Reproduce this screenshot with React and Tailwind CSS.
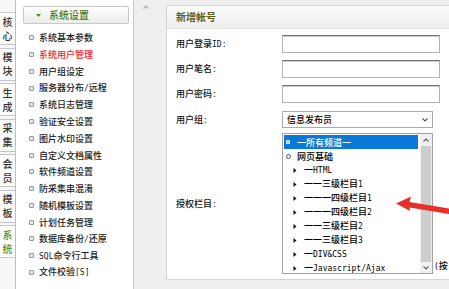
import React from "react";

const M = ({ children }) => (
  <span className="font-['DejaVu_Sans_Mono',monospace] text-[8px] font-normal">{children}</span>
);

const tabs = ["核心", "模块", "生成", "采集", "会员", "模板", "系统"];

const menu = [
  { t: "系统基本参数" },
  { t: "系统用户管理", red: true },
  { t: "用户组设定" },
  { t: <>服务器分布<M>/</M>远程</> },
  { t: "系统日志管理" },
  { t: "验证安全设置" },
  { t: "图片水印设置" },
  { t: "自定义文档属性" },
  { t: "软件频道设置" },
  { t: "防采集串混淆" },
  { t: "随机模板设置" },
  { t: "计划任务管理" },
  { t: <>数据库备份<M>/</M>还原</> },
  { t: <><M>SQL</M>命令行工具</> },
  { t: <>文件校验<M>[S]</M></> },
];

const rows = [
  { lvl: 0, sel: true, icon: "sq", t: "一所有频道一" },
  { lvl: 0, icon: "o", t: "网页基础" },
  { lvl: 1, t: <>一<M>HTML</M></> },
  { lvl: 1, t: <>一一三级栏目<M>1</M></> },
  { lvl: 1, t: <>一一一四级栏目<M>1</M></> },
  { lvl: 1, t: <>一一一四级栏目<M>2</M></> },
  { lvl: 1, t: <>一一三级栏目<M>2</M></> },
  { lvl: 1, t: <>一一三级栏目<M>3</M></> },
  { lvl: 1, t: <>一<M>DIV&amp;CSS</M></> },
  { lvl: 1, t: <>一<M>Javascript/Ajax</M></> },
];

function Icon({ kind }) {
  if (kind === "sq")
    return <span className="block w-[4px] h-[4px] border border-[#d6e8fa] bg-[#9cc4ee]" />;
  if (kind === "o")
    return <span className="block w-[5px] h-[5px] rounded-full border border-[#555]" />;
  return (
    <svg width="4" height="5" viewBox="0 0 4 5" className="block">
      <polygon points="0.5,0 3.5,2.5 0.5,5" fill="#111" />
    </svg>
  );
}

function Chevron({ up, color = "#606060" }) {
  return (
    <svg width="6" height="4" viewBox="0 0 6 4" className="block">
      <polyline
        points={up ? "0.5,3.5 3,1 5.5,3.5" : "0.5,0.5 3,3 5.5,0.5"}
        fill="none"
        stroke={color}
        strokeWidth="1.1"
      />
    </svg>
  );
}

export default function App() {
  return (
    <div className="relative w-[449px] h-[289px] overflow-hidden bg-[#efefef] flex font-['Noto_Sans_CJK_SC',sans-serif] font-medium text-black">
      {/* left tabs */}
      <div className="w-[16px] shrink-0 border-r border-[#bdbdbd] bg-[#f7f7f7] flex flex-col pt-[12px] gap-[2.5px]">
        {tabs.map((t, i) => (
          <div
            key={t}
            className={
              i === 6
                ? "h-[33px] border-y border-[#c6c6c6] bg-white flex flex-col items-center justify-center text-[10px] leading-[14px] text-[#5a9216]"
                : "h-[33px] border-y border-[#c6c6c6] bg-[#fbfbfb] flex flex-col items-center justify-center text-[10px] leading-[14px] text-[#333]"
            }
          >
            <span>{t[0]}</span>
            <span>{t[1]}</span>
          </div>
        ))}
      </div>

      {/* sidebar */}
      <div className="w-[118px] shrink-0 bg-white border-r border-[#c8c8c8] flex flex-col pt-[6px]">
        <div className="ml-[7px] w-[106px] h-[18px] border border-[#c9c9c9] rounded-[2px] bg-gradient-to-b from-white to-[#ebebeb] flex items-center">
          <svg width="5" height="3" viewBox="0 0 5 3" className="ml-[12px]">
            <polygon points="0,0 5,0 2.5,3" fill="#4f8a1a" />
          </svg>
          <span className="ml-[8px] text-[10px] leading-none text-[#4c7d18]">系统设置</span>
        </div>
        <div className="mt-[5.5px] flex flex-col">
          {menu.map((m, i) => (
            <div key={i} className="h-[16.75px] flex items-center pl-[13px]">
              <span className="w-[5px] h-[5px] rounded-[1px] border border-[#8d99a3] bg-[#e3e8ec] shrink-0" />
              <span
                className={
                  m.red
                    ? "ml-[5px] text-[9px] leading-none whitespace-nowrap text-[#ff1a1a]"
                    : "ml-[5px] text-[9px] leading-none whitespace-nowrap text-[#1a1a1a]"
                }
              >
                {m.t}
              </span>
            </div>
          ))}
        </div>
      </div>

      {/* gutter */}
      <div className="w-[32px] shrink-0 pt-[5px] pl-[9px]">
        <Chevron up color="#a8a8a8" />
      </div>

      {/* main panel */}
      <div className="flex-1 pt-[5px]">
        <div className="h-[275px] bg-white border-l border-t border-b border-[#d4d4d4] flex flex-col">
          <div className="h-[23px] shrink-0 border-b border-[#e2e2e2] bg-gradient-to-b from-[#fcfcfc] to-[#eeeeee] flex items-center pl-[9px]">
            <span className="text-[10px] font-bold leading-none text-[#5e5e1c]">新增帐号</span>
          </div>

          <div className="flex flex-col pl-[9px]">
            {[
              ["用户登录", "ID:"],
              ["用户笔名", ":"],
              ["用户密码", ":"],
            ].map(([a, b], i) => (
              <div key={a} className={i === 0 ? "mt-[6px] flex items-center" : "mt-[7px] flex items-center"}>
                <div className="w-[106px] shrink-0 text-[9px] leading-none whitespace-nowrap text-[#111]">
                  {a}
                  <M>{b}</M>
                </div>
                <div className="w-[158px] h-[18px] border border-[#b4b4b4] border-t-[#6f6f6f] bg-white shadow-[inset_0_1px_0_#cfcfcf]" />
              </div>
            ))}

            <div className="mt-[8px] flex items-center">
              <div className="w-[106px] shrink-0 text-[9px] leading-none text-[#111]">
                用户组<M>:</M>
              </div>
              <div className="w-[151px] h-[17px] border border-[#ababab] bg-white flex items-center justify-between pl-[4px] pr-[4px]">
                <span className="text-[9px] leading-none">信息发布员</span>
                <Chevron color="#555" />
              </div>
            </div>

            <div className="mt-[5px] flex items-center">
              <div className="w-[106px] shrink-0 text-[9px] leading-none text-[#111]">
                授权栏目<M>:</M>
              </div>
              <div className="flex items-end">
                <div className="w-[151px] h-[141px] border border-[#a3a3a3] bg-white flex">
                  <div className="flex-1 flex flex-col pt-[1px] overflow-hidden">
                    {rows.map((r, i) => (
                      <div
                        key={i}
                        className={
                          r.sel
                            ? "h-[14px] shrink-0 flex items-center ml-[1px] mr-[2px] bg-[#0a78d7] text-white pl-[2px]"
                            : r.lvl === 0
                            ? "h-[14px] shrink-0 flex items-center pl-[3px] text-black"
                            : "h-[14px] shrink-0 flex items-center pl-[10px] text-black"
                        }
                      >
                        <span className="w-[8px] shrink-0 flex items-center">
                          <Icon kind={r.icon} />
                        </span>
                        <span className="ml-[3px] text-[9px] leading-none whitespace-nowrap">{r.t}</span>
                      </div>
                    ))}
                  </div>
                  <div className="w-[12px] shrink-0 bg-[#f0f0f0] flex flex-col">
                    <div className="h-[12px] flex items-center justify-center">
                      <Chevron up />
                    </div>
                    <div className="h-[116px] mx-[1px] bg-[#cdcdcd]" />
                    <div className="flex-1 flex items-center justify-center">
                      <Chevron />
                    </div>
                  </div>
                </div>
                <span className="ml-[1px] mb-[1px] text-[9px] leading-[12px] whitespace-nowrap">
                  <M>(</M>按
                </span>
              </div>
            </div>
          </div>
        </div>
      </div>

      {/* red arrow */}
      <svg className="absolute left-0 top-0 pointer-events-none" width="449" height="289" viewBox="0 0 449 289">
        <polygon
          points="396,203.5 411,196.5 409.5,202 449,208.5 449,214 409.5,207.5 410,211"
          fill="#e8302a"
        />
      </svg>
    </div>
  );
}
